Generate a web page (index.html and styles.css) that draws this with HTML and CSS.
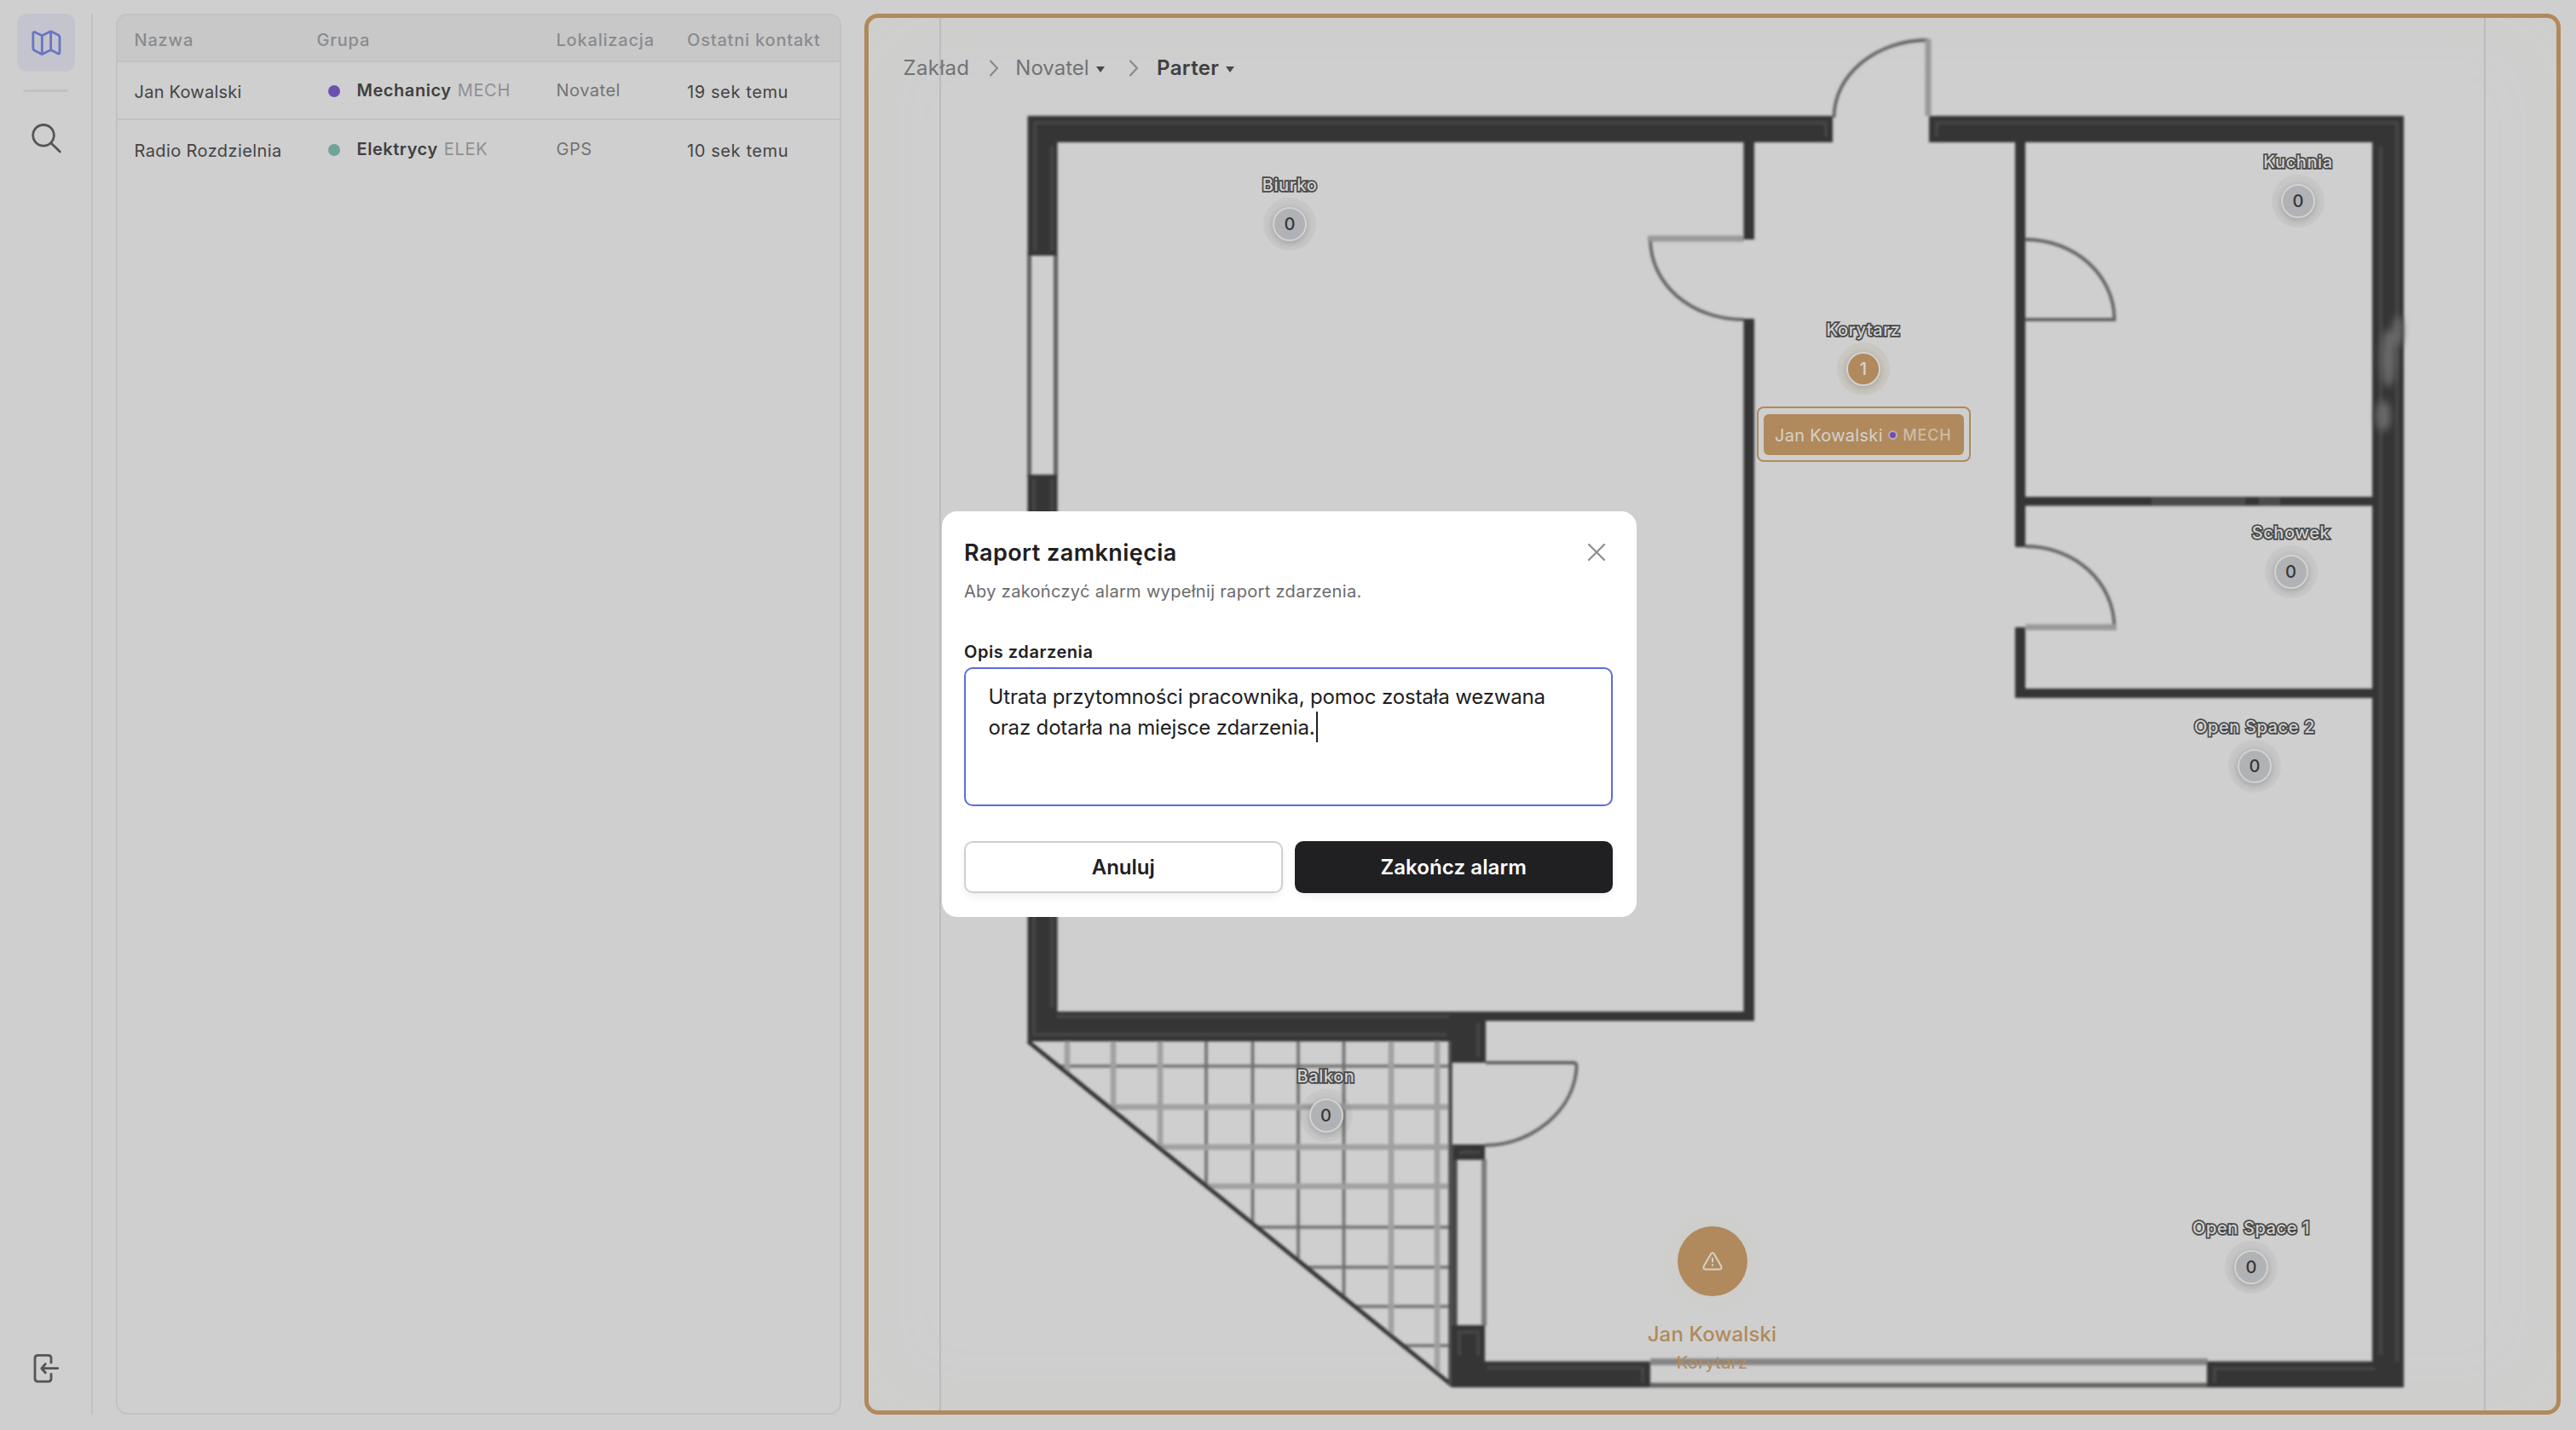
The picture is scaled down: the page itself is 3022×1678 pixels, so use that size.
FILE: index.html
```html
<!DOCTYPE html>
<html lang="pl">
<head>
<meta charset="utf-8">
<title>Raport zamknięcia</title>
<link rel="stylesheet" href="styles.css">
</head>
<body>
<div class="app">
  <aside class="sidebar">
    <a class="nav-item active">
      <svg width="40" height="40" viewBox="34 30 40 40"><path d="M38.8 39.5Q38.8 37 41 37.8L49.3 41.8L59.6 36.8L68.3 41Q70 42 70 43.5V60.5Q70 64 67.3 62.6L59.6 58.6L49.3 63.8L40.5 59.3Q38.8 58.3 38.8 56.8ZM49.3 41.8V63.8M59.6 36.8V58.6"/></svg>
    </a>
    <hr class="nav-rule">
    <a class="nav-item">
      <svg width="40" height="40" viewBox="34 142 40 40"><circle cx="51" cy="158.8" r="12.3"/><path d="M60 168L70.3 178"/></svg>
    </a>
    <a class="nav-item exit">
      <svg width="40" height="40" viewBox="34 1585 40 40"><path d="M60 1598V1593Q60 1589.3 56.5 1589.3H44.5Q41 1589.3 41 1593V1616.5Q41 1620.2 44.5 1620.2H56.5Q60 1620.2 60 1616.5V1611.5M67.8 1604.7H49M53.3 1599.5L48.8 1604.7L53.3 1609.8"/></svg>
    </a>
  </aside>

  <section class="panel">
    <div class="row head"><span>Nazwa</span><span>Grupa</span><span>Lokalizacja</span><span>Ostatni kontakt</span></div>
    <div class="row">
      <span class="low">Jan Kowalski</span>
      <span class="group"><i class="dot mech"></i><b>Mechanicy</b><em>MECH</em></span>
      <span class="place">Novatel</span>
      <span class="low time">19 sek temu</span>
    </div>
    <div class="row last">
      <span class="low wide">Radio Rozdzielnia</span>
      <span class="group"><i class="dot elek"></i><b>Elektrycy</b><em>ELEK</em></span>
      <span class="place">GPS</span>
      <span class="low time">10 sek temu</span>
    </div>
  </section>

  <main class="map">
    <div class="frame"></div>
    <svg class="plan" viewBox="1019 21 1980 1634">
      <defs>
        <filter id="soft" x="-2%" y="-2%" width="104%" height="104%"><feGaussianBlur stdDeviation="1.7"/></filter>
        <filter id="smudge" x="-50%" y="-50%" width="200%" height="200%"><feGaussianBlur stdDeviation="4"/></filter>
        <clipPath id="balcony"><path d="M1206 1222H1704V1626Z"/></clipPath>
      </defs>
      <g filter="url(#soft)">
        <!-- balcony tiles -->
        <g clip-path="url(#balcony)" fill="none" stroke="#6f6f6f" stroke-width="3.6">
          <path d="M1415 1222V1640M1469.5 1222V1640M1523 1222V1640M1576.500 1222V1640"/>
          <path d="M1206 1251H1704M1206 1440H1704M1206 1487H1704M1206 1533H1704M1206 1579H1704"/>
          <path stroke="#a0a0a0" stroke-width="6.5" d="M1252 1222V1640M1306 1222V1640M1361 1222V1640M1632 1222V1640M1686 1222V1640M1206 1299H1704M1206 1346H1704M1206 1392H1704"/>
        </g>
        <path d="M1206 1222L1704 1626" stroke="#303030" stroke-width="4.800"/>
        <path d="M1701.500 1222V1626" stroke="#4a4a4a" stroke-width="4.500"/>

        <!-- doors -->
        <g fill="none" stroke="#626262" stroke-width="3.800">
          <path d="M2151.500 138C2151.500 88 2200 47 2262 47"/>
          <path d="M1936 280C1936 334 1984 375 2046 375"/>
          <path d="M2376 281C2434 281 2480.500 323 2480.500 375H2376"/>
          <path d="M2376 641C2434 641 2480.500 683 2480.500 737"/>
          <path d="M1743 1247H1846Q1850 1247 1849.500 1253C1846 1304 1798 1343 1742 1344"/>
        </g>
        <g fill="none" stroke="#989898" stroke-width="7">
          <path d="M2262 46V136M1933 280H2046M2376 736H2483"/>
        </g>

        <!-- windows -->
        <path d="M1207.500 298V560M1238.500 298V560" stroke="#606060" stroke-width="5"/>
        <path d="M1706.500 1360V1556" stroke="#444" stroke-width="6"/>
        <path d="M1741 1360V1556" stroke="#7c7c7c" stroke-width="6"/>
        <path d="M1936 1598H2590" stroke="#868686" stroke-width="8"/>
        <path d="M1936 1625.500H2590" stroke="#606060" stroke-width="5.500"/>

        <!-- walls -->
        <g fill="#353535">
          <path d="M1205.500 136H2150V167H1240.500V300H1205.500Z"/>
          <path d="M2263 136H2820V1628H2589V1597.500H2783V167H2263Z"/>
          <path d="M1205.500 557H1240.500V1187H2058V1198H1743V1247H1703V1222H1205.500Z"/>
          <path d="M2045.500 160H2058V281H2045.500ZM2045.500 374H2058V1197H2045.500Z"/>
          <path d="M2364 160H2376V583H2790V593.500H2376V642H2364Z"/>
          <path d="M2364 736H2376V808H2790V819H2364Z"/>
          <path d="M1704 1343H1742V1361H1704ZM1703 1555H1742V1597.500H1936V1628H1703Z"/>
        </g>
        <g fill="none" stroke="#454545" stroke-width="4">
          <path d="M1214 294V144H2142V160M2272 160V144H2812V1598M1234 294V172"/>
          <path d="M1213 562V1214H1697M1234 562V1182M1240 1193H1700M1734 1200V1240M2793 172V1590M2598 1622V1606H2786M1712 1352H1736"/>
          <path d="M1712 1590V1563H1734V1590M1745 1605H1927V1622"/>
        </g>
        <path d="M2524 588H2634M2650 588H2675" stroke="#4c4c4c" stroke-width="8"/>
      </g>
      <g fill="#686868" filter="url(#smudge)"><ellipse cx="2802" cy="420" rx="9" ry="34"/><ellipse cx="2813" cy="388" rx="6" ry="18"/><ellipse cx="2796" cy="488" rx="9" ry="18"/></g>
    </svg>

    <nav class="crumbs">
      <span>Zakład</span>
      <svg class="sep" width="12" height="20" viewBox="0 0 12 20"><path d="M1.500 1L10 10L1.500 19"/></svg>
      <span class="mid">Novatel</span><i class="caret-down"></i>
      <svg class="sep second" width="12" height="20" viewBox="0 0 12 20"><path d="M1.500 1L10 10L1.500 19"/></svg>
      <b>Parter</b><i class="caret-down"></i>
    </nav>

    <div class="pin p-biurko"><span>Biurko</span><b>0</b></div>
    <div class="pin p-kuchnia"><span>Kuchnia</span><b>0</b></div>
    <div class="pin alert p-korytarz"><span>Korytarz</span><b>1</b></div>
    <div class="pin p-schowek"><span>Schowek</span><b>0</b></div>
    <div class="pin p-open2"><span>Open Space 2</span><b>0</b></div>
    <div class="pin p-open1"><span>Open Space 1</span><b>0</b></div>
    <div class="pin p-balkon"><span>Balkon</span><b>0</b></div>

    <div class="tag"><div class="tag-body">Jan Kowalski<i></i><em>MECH</em></div></div>

    <div class="alarm">
      <div class="alarm-disc">
        <svg width="26" height="24" viewBox="0 0 26 24"><path d="M11.200 3.200Q13 .6 14.800 3.200L23.300 18Q24.300 21.400 21.300 21.600H4.700Q1.700 21.400 2.700 18ZM13 8.800V12.400M13 16V16.800"/></svg>
      </div>
      <strong>Jan Kowalski</strong>
      <span>Korytarz</span>
    </div>
  </main>
</div>

<div class="overlay">
  <div class="modal" role="dialog">
    <header>
      <h1>Raport zamknięcia</h1>
      <svg class="close" width="20" height="20" viewBox="0 0 20 20"><path d="M1 1L19 19M19 1L1 19"/></svg>
    </header>
    <p class="sub">Aby zakończyć alarm wypełnij raport zdarzenia.</p>
    <div class="label">Opis zdarzenia</div>
    <div class="field">Utrata przytomności pracownika, pomoc została wezwana<br>oraz dotarła na miejsce zdarzenia.<i class="cursor"></i></div>
    <footer>
      <button class="btn">Anuluj</button>
      <button class="btn dark">Zakończ alarm</button>
    </footer>
  </div>
</div>
</body>
</html>
```
FILE: styles.css
```css
* { box-sizing: border-box; }
body { margin: 0; height: 1678px; overflow: hidden; background: #cfcfcf; font-family: Inter, "Liberation Sans", sans-serif; font-size: 20px; color: #444; }
em, i { font-style: normal; }

.app { display: flex; height: 1678px; padding: 16px 18px 18px 20px; }

.sidebar { display: flex; flex-direction: column; width: 89px; margin-right: 27px; border-right: 2px solid #c2c2c2; }
.nav-item { display: flex; align-items: center; justify-content: center; width: 68px; height: 68px; border-radius: 12px; }
.nav-item svg { fill: none; stroke: #555; stroke-width: 2.8; stroke-linecap: round; stroke-linejoin: round; }
.nav-item.active { background: #c4c4cf; }
.nav-item.active svg { stroke: #6975c3; }
.nav-rule { width: 53px; height: 3px; margin: 21px 0 20px 7px; border: 0; border-radius: 2px; background: #c2c2c2; }
.nav-item.exit { margin-top: auto; margin-bottom: 20px; }

.panel { width: 851px; margin-right: 27px; border: 2px solid #c2c2c2; border-radius: 14px; overflow: hidden; }
.row { display: grid; grid-template-columns: 214px 281px 153.500px 1fr; align-items: center; height: 68px; padding-left: 19.500px; border-bottom: 2px solid #c2c2c2; letter-spacing: .25px; line-height: 24px; white-space: nowrap; }
.row.last { border-bottom: 0; }
.row.head { height: 55px; padding-top: 4px; background: #c8c8c8; color: #8a8b8f; font-weight: 500; letter-spacing: .8px; }
.low { padding-top: 3px; }
.low.wide { letter-spacing: .4px; }
.low.time { letter-spacing: .6px; }
.group { display: flex; align-items: center; }
.group b { font-weight: 600; color: #404040; letter-spacing: .55px; }
.group em { margin-left: 7px; color: #8f9095; letter-spacing: .7px; }
.dot { width: 14px; height: 14px; margin: 1px 19.500px 0 13.500px; border-radius: 50%; }
.dot.mech { background: #6b50b2; }
.dot.elek { background: #6fa39b; }
.place { color: #737477; letter-spacing: .5px; }

.map { position: relative; width: 1990px; border: 5px solid #b08a5c; border-radius: 16px; box-shadow: inset 0 0 100px rgba(200, 200, 150, .05); }
.frame { position: absolute; inset: 0 83px 0 83px; border: solid #bcbcbe; border-width: 0 2px 0 2px; }
.plan { position: absolute; inset: 0; width: 1980px; height: 1634px; }

.crumbs { position: relative; display: flex; align-items: center; height: 30px; margin: 44px 0 0 40.500px; font-size: 24px; line-height: 30px; color: #727376; letter-spacing: .35px; }
.crumbs .mid { letter-spacing: 0; }
.crumbs b { font-weight: 600; color: #404040; }
.sep { margin: 0 19.500px 0 22.500px; fill: none; stroke: #85868a; stroke-width: 2; }
.sep.second { margin: 0 21px 0 28.500px; }
.caret-down { margin-left: 8px; margin-top: 2px; border: solid transparent; border-width: 7px 5.500px 0; border-top-color: #484848; }

.pin { position: absolute; display: flex; flex-direction: column; align-items: center; width: 200px; margin-left: -1119px; margin-top: -33px; gap: 14px; }
.pin span { font-weight: 500; line-height: 24px; letter-spacing: .6px; color: #d2d2d2; -webkit-text-stroke: 3.400px #484848; paint-order: stroke fill; }
.pin b { width: 40px; height: 40px; border: 2px solid #d2d2d2; border-radius: 50%; background: #b0b2b5; color: #363636; font-weight: 500; line-height: 36px; text-align: center; box-shadow: 0 0 0 11px rgba(90, 90, 90, .06), 0 2px 9px rgba(0, 0, 0, .22); }
.pin.alert b { background: #b08a5c; color: #d8d3cc; box-shadow: 0 0 0 11px rgba(176, 138, 92, .12), 0 2px 9px rgba(0, 0, 0, .22); }
.p-biurko { left: 1513px; top: 217px; }
.p-kuchnia { left: 2696px; top: 190px; }
.p-korytarz { left: 2186px; top: 387px; }
.p-schowek { left: 2687.500px; top: 625px; }
.p-open2 { left: 2645px; top: 853px; }
.p-open1 { left: 2641px; top: 1441px; }
.p-balkon { left: 1555.500px; top: 1263px; }

.tag { position: absolute; left: 1042px; top: 456px; width: 251px; height: 65px; padding: 7px 6px; border: 2px solid #b08a5c; border-radius: 8px; background: #cfcfcf; }
.tag-body { display: flex; align-items: center; height: 48px; padding: 1px 0 0 13px; border-radius: 6px; background: #b08a5c; color: #d6d1ca; letter-spacing: .3px; white-space: nowrap; }
.tag-body i { width: 11px; height: 11px; margin: 0 6px 0 6.500px; border: 2.500px solid #bda9b3; border-radius: 50%; background: #6b50b2; }
.tag-body em { font-size: 18px; font-weight: 500; color: #cdbca6; letter-spacing: .8px; }

.alarm { position: absolute; left: 889.500px; top: 1418px; width: 200px; display: flex; flex-direction: column; align-items: center; color: #b08a5c; }
.alarm-disc { display: flex; align-items: center; justify-content: center; width: 82px; height: 82px; border-radius: 50%; background: #b08a5c; box-shadow: 0 0 30px rgba(200, 190, 120, .1); }
.alarm-disc svg { fill: none; stroke: #d6d1ca; stroke-width: 2; stroke-linecap: round; stroke-linejoin: round; }
.alarm strong { margin-top: 30px; font-size: 24px; font-weight: 500; line-height: 30px; letter-spacing: .15px; }
.alarm span { margin-top: 6px; line-height: 24px; letter-spacing: .35px; }

.overlay { position: fixed; inset: 0; display: flex; align-items: center; justify-content: center; padding: 0 0 2px 2px; }
.modal { width: 815px; height: 476px; padding: 27px 27px 28px 26.500px; border-radius: 18px; background: #fff; color: #202022; }
.modal header { display: flex; justify-content: space-between; height: 42px; }
.modal h1 { margin: 5px 0 0; font-size: 27px; font-weight: 600; line-height: 34px; letter-spacing: .45px; }
.close { margin: 11px 10px 0 0; fill: none; stroke: #8b8c90; stroke-width: 2.200; stroke-linecap: round; }
.sub { margin: 13px 0 0; line-height: 24px; color: #6a6b6e; letter-spacing: .32px; }
.label { margin-top: 47px; font-weight: 600; line-height: 24px; letter-spacing: .55px; }
.field { width: 761px; height: 163px; margin-top: 6px; padding: 15px 0 0 26.500px; border: 2px solid #5a6ce0; border-radius: 10px; font-size: 24px; line-height: 36px; letter-spacing: -.16px; white-space: nowrap; }
.cursor { display: inline-block; width: 2px; height: 36px; margin-left: 1px; margin-top: -1px; vertical-align: top; background: #202022; }
.modal footer { display: flex; gap: 14px; width: 761px; margin-top: 41px; }
.btn { flex: 1; height: 61px; padding: 0; border: 2px solid #cfcfcf; border-radius: 10px; background: #fff; color: #202022; font: 600 24px/57px Inter, sans-serif; box-shadow: 0 4px 8px rgba(0, 0, 0, .06); }
.btn.dark { border-color: #202022; background: #202022; color: #fff; letter-spacing: .1px; }
```
